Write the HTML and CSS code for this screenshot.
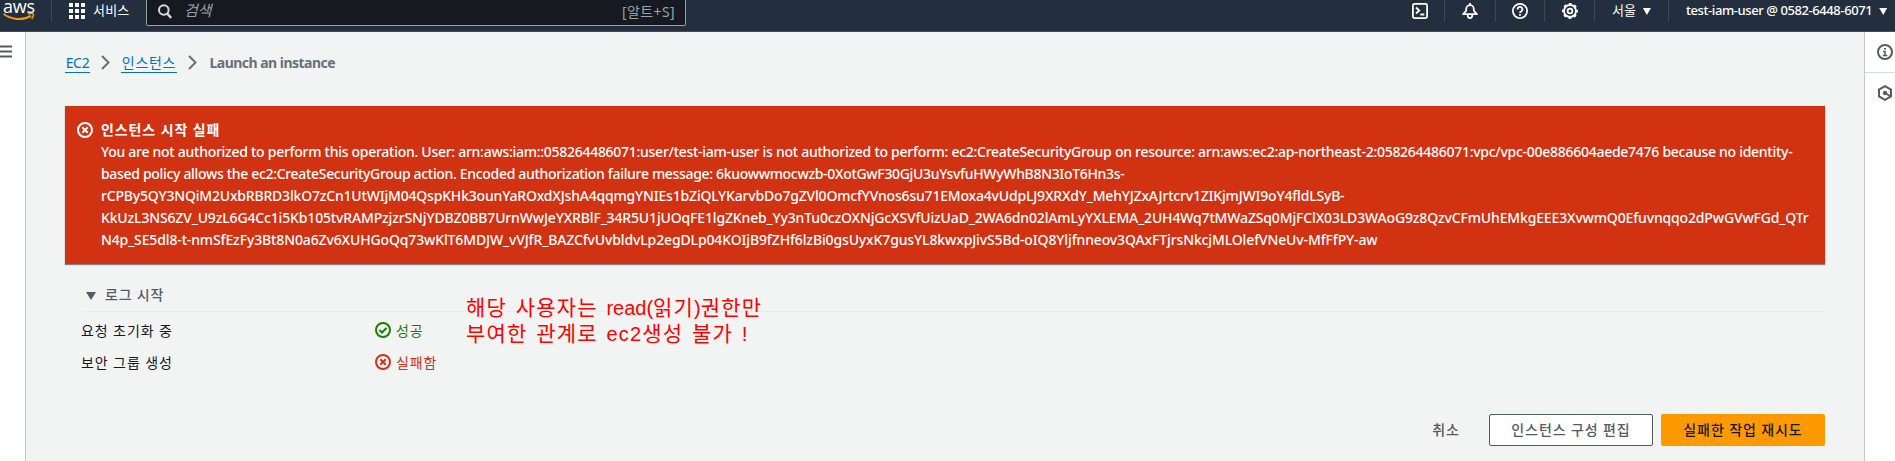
FILE: index.html
```html
<!DOCTYPE html>
<html lang="ko">
<head>
<meta charset="utf-8">
<title>Launch an instance</title>
<link rel="stylesheet" href="styles.css">
</head>
<body>
<header class="topbar">
  <div class="logo">
    <span class="logo-text">aws</span>
    <svg class="smile" width="32" height="8" viewBox="0 0 32 8" fill="none" stroke="#ff9900"><path d="M.5 1C8.500 6.800 19.500 7.800 28 2.800" stroke-width="2"/><path d="M25 1.300c2-.8 4.700-1 5.300-.3.500.9-.3 3.500-1.700 4.900" stroke-width="1.500"/></svg>
  </div>
  <div class="services">
    <svg width="16" height="16" viewBox="0 0 16 16" fill="#fff"><path d="M0 0h4v4H0zM6 0h4v4H6zM12 0h4v4h-4zM0 6h4v4H0zM6 6h4v4H6zM12 6h4v4h-4zM0 12h4v4H0zM6 12h4v4H6zM12 12h4v4h-4z"/></svg>
    <span>서비스</span>
  </div>
  <div class="search">
    <svg width="14" height="15" viewBox="0 0 14 15" fill="none" stroke="#d5dbdb" stroke-width="2"><circle cx="5.800" cy="6" r="4.800"/><path d="M9.200 9.600l4 4.200" stroke-width="2.400"/></svg>
    <span class="placeholder">검색</span>
    <span class="shortcut">[알트+S]</span>
  </div>
  <nav class="tools">
    <div class="tool tool-shell"><svg width="16" height="16" viewBox="0 0 16 16" fill="none" stroke="#fff" stroke-width="1.800"><rect x=".9" y=".9" width="14.200" height="14.200" rx="1.500"/><path d="M4 4.500l3.300 3L4 10.500M8.300 11.500h4"/></svg></div>
    <div class="tool tool-bell"><svg width="16" height="16" viewBox="0 0 16 16" fill="none" stroke="#fff" stroke-width="1.800" stroke-linejoin="round"><path d="M8 0v2M1.200 11.200l3-3.500V6a3.800 3.800 0 0 1 7.600 0v1.700l3 3.500zM5.800 11.500v1.300a2.200 2.200 0 0 0 4.400 0v-1.300"/></svg></div>
    <div class="tool tool-help"><svg width="16" height="16" viewBox="0 0 16 16" fill="none" stroke="#fff" stroke-width="1.800"><circle cx="8" cy="8" r="7.100"/><path d="M5.600 6.500a2.400 2.400 0 1 1 3.600 1.900c-.8.400-1.200.8-1.200 1.700M8 11v1.800"/></svg></div>
    <div class="tool tool-gear"><svg width="16" height="16" viewBox="0 0 16 16" fill="none" stroke="#fff"><circle cx="8" cy="8" r="6" stroke-width="1.800"/><circle cx="8" cy="8" r="7.200" stroke-width="1.600" stroke-dasharray="2.800 2.855" stroke-dashoffset="1.400"/><circle cx="8" cy="8" r="2.400" stroke-width="1.800"/></svg></div>
    <div class="tool tool-region"><span>서울</span><i class="caret"></i></div>
    <div class="tool tool-user"><span>test-iam-user @ 0582-6448-6071</span><i class="caret"></i></div>
  </nav>
</header>
<div class="shell">
  <aside class="left-rail"><svg width="12" height="13" viewBox="0 0 12 13" fill="#545b64"><path d="M0 .5h12v2H0zM0 5.500h12v2H0zM0 10.500h12v2H0z"/></svg></aside>
  <main class="content">
    <nav class="crumbs">
      <a class="crumb-ec2">EC2</a>
      <svg width="9" height="15" viewBox="0 0 9 15" fill="none" stroke="#687078" stroke-width="2"><path d="M1 1l6.500 6.500L1 14"/></svg>
      <a class="crumb-inst">인스턴스</a>
      <svg width="9" height="15" viewBox="0 0 9 15" fill="none" stroke="#687078" stroke-width="2"><path d="M1 1l6.500 6.500L1 14"/></svg>
      <b>Launch an instance</b>
    </nav>
    <section class="alert">
      <svg width="16" height="16" viewBox="0 0 16 16" fill="none" stroke="#fff" stroke-width="2"><circle cx="8" cy="8" r="7"/><path d="M5.300 5.300l5.400 5.400M10.700 5.300l-5.400 5.400"/></svg>
      <div class="alert-body">
        <h2>인스턴스 시작 실패</h2>
        <p class="l1">You are not authorized to perform this operation. User: arn:aws:iam::058264486071:user/test-iam-user is not authorized to perform: ec2:CreateSecurityGroup on resource: arn:aws:ec2:ap-northeast-2:058264486071:vpc/vpc-00e886604aede7476 because no identity-</p>
        <p class="l2">based policy allows the ec2:CreateSecurityGroup action. Encoded authorization failure message: 6kuowwmocwzb-0XotGwF30GjU3uYsvfuHWyWhB8N3IoT6Hn3s-</p>
        <p class="l3">rCPBy5QY3NQiM2UxbRBRD3lkO7zCn1UtWIjM04QspKHk3ounYaROxdXJshA4qqmgYNIEs1bZiQLYKarvbDo7gZVl0OmcfYVnos6su71EMoxa4vUdpLJ9XRXdY_MehYJZxAJrtcrv1ZIKjmJWI9oY4fldLSyB-</p>
        <p class="l4">KkUzL3NS6ZV_U9zL6G4Cc1i5Kb105tvRAMPzjzrSNjYDBZ0BB7UrnWwJeYXRBlF_34R5U1jUOqFE1lgZKneb_Yy3nTu0czOXNjGcXSVfUizUaD_2WA6dn02lAmLyYXLEMA_2UH4Wq7tMWaZSq0MjFClX03LD3WAoG9z8QzvCFmUhEMkgEEE3XvwmQ0Efuvnqqo2dPwGVwFGd_QTr</p>
        <p class="l5">N4p_SE5dl8-t-nmSfEzFy3Bt8N0a6Zv6XUHGoQq73wKlT6MDJW_vVJfR_BAZCfvUvbldvLp2egDLp04KOIjB9fZHf6lzBi0gsUyxK7gusYL8kwxpJivS5Bd-oIQ8Yljfnneov3QAxFTjrsNkcjMLOlefVNeUv-MfFfPY-aw</p>
      </div>
    </section>
    <section class="log">
      <div class="log-head"><i class="caret"></i><span>로그 시작</span></div>
      <div class="log-row"><span class="step">요청 초기화 중</span><span class="ok"><svg width="16" height="16" viewBox="0 0 16 16" fill="none" stroke="#1d8102" stroke-width="2"><circle cx="8" cy="8" r="7"/><path d="M4.500 8l2.500 2.500 4.500-4.500"/></svg>성공</span></div>
      <div class="log-row"><span class="step">보안 그룹 생성</span><span class="fail"><svg width="16" height="16" viewBox="0 0 16 16" fill="none" stroke="#d13212" stroke-width="2"><circle cx="8" cy="8" r="7"/><path d="M5.300 5.300l5.400 5.400M10.700 5.300l-5.400 5.400"/></svg>실패함</span></div>
      <div class="note"><div>해당 사용자는 <span class="latin">read(</span>읽기<span class="latin">)</span>권한만</div><div>부여한 관계로 <span class="latin wide">ec2</span>생성 불가 !</div></div>
    </section>
    <div class="actions">
      <span class="btn btn-link">취소</span>
      <span class="btn btn-normal">인스턴스 구성 편집</span>
      <span class="btn btn-primary">실패한 작업 재시도</span>
    </div>
  </main>
  <aside class="right-rail">
    <div class="rail-item"><svg width="16" height="16" viewBox="0 0 16 16" fill="none" stroke="#545b64" stroke-width="2"><circle cx="8" cy="8" r="7"/><path d="M6 7.500h2V11M5.800 11.500h4.500M7 4.800h2" stroke-width="1.500"/></svg></div>
    <div class="rail-item"><svg width="16" height="16" viewBox="0 0 16 16" fill="none" stroke="#545b64" stroke-width="2"><path d="M8 1.200l6 3.400v6.800l-6 3.400-6-3.400V4.600z"/><circle cx="8" cy="8" r="2.200" fill="#545b64" stroke="none"/><path d="M8 8l5 3"/></svg></div>
  </aside>
</div>
</body>
</html>
```
FILE: styles.css
```css
* { box-sizing: border-box; }
body {
  margin: 0; height: 461px; overflow: hidden; display: flex; flex-direction: column;
  font: 14px/22px "Noto Sans", "Noto Sans CJK KR", sans-serif; color: #16191f; background: #f2f3f3;
}
svg { display: block; flex: none; }
h2, p { margin: 0; }
.topbar { height: 32px; flex: none; display: flex; align-items: flex-start; background: #232f3e; border-bottom: 1px solid #414d5c; color: #fff; }
.logo { width: 52px; height: 22px; padding-left: 3px; border-right: 1px solid #414750; }
.logo-text { display: block; height: 13px; font: 500 18px/13px "Open Sans", sans-serif; letter-spacing: -.2px; }
.services { width: 94px; display: flex; gap: 8px; padding: 3px 0 0 17px; }
.services span { font-size: 13px; line-height: 14px; letter-spacing: .2px; white-space: nowrap; }
.search { width: 540px; height: 26px; display: flex; align-items: flex-start; padding: 4px 10px 0 11px; background: #16191f; border: 1px solid #95a5a6; border-top: 0; border-radius: 0 0 2px 2px; color: #95a5a6; }
.placeholder { margin-left: 12px; font-style: italic; font-size: 15px; line-height: 13px; }
.shortcut { margin-left: auto; line-height: 15px; letter-spacing: .4px; }
.tools { margin-left: auto; display: flex; }
.tool { height: 22px; border-right: 1px solid #414750; display: flex; padding-top: 3px; }
.tool:last-child { border: 0; }
.tool-shell { width: 33px; }
.tool-bell { width: 51px; padding-left: 17px; }
.tool-help { width: 49px; padding-left: 16px; }
.tool-gear { width: 50px; padding-left: 17px; }
.tool-region { width: 74px; padding-left: 17px; font-size: 13px; line-height: 15px; }
.tool-region .caret { margin-left: 6px; }
.tool-user { width: 226px; padding-left: 17px; line-height: 15px; font-size: 13px; font-weight: 500; letter-spacing: -.42px; }
.tool span { white-space: nowrap; }
.caret { flex: none; width: 8px; height: 7px; background: currentColor; clip-path: polygon(0 0, 100% 0, 50% 100%); }
.tool .caret { margin: 5px 0 0 7px; }
.shell { flex: 1; display: flex; min-height: 0; }
.left-rail { width: 26px; background: #fff; border-right: 1px solid #c6cccd; padding-top: 13px; }
.content { flex: 1; min-width: 0; padding: 0 39px; }
.crumbs { height: 74px; padding-top: 20px; display: flex; align-items: flex-start; }
.crumbs a { color: #0073bb; border-bottom: 1px solid #0073bb; height: 21px; text-align: center; white-space: nowrap; }
.crumbs svg { margin: 3px 11px 0 11px; }
.crumbs .crumb-inst + svg { margin-right: 12.500px; }
.crumb-ec2 { width: 25px; letter-spacing: -.3px; }
.crumb-inst { width: 56px; letter-spacing: .7px; }
.crumbs b { color: #687078; font-weight: 700; letter-spacing: -.52px; white-space: nowrap; }
.alert { height: 158px; background: #d13212; color: #fff; display: flex; padding: 13px 0 0 12px; gap: 8px; box-shadow: 0 1px 1px rgba(0,28,36,.5); }
.alert svg { margin-top: 3px; }
.alert h2 { font-size: 14px; line-height: 22px; font-weight: 600; letter-spacing: .9px; }
.alert p { white-space: nowrap; font-weight: 500; }
.l1 { letter-spacing: -.275px; }
.l2 { letter-spacing: -.32px; }
.l3 { letter-spacing: -.19px; }
.l4 { letter-spacing: -.152px; }
.l5 { letter-spacing: -.133px; }
.log { position: relative; padding: 20px 0 0 16px; height: 140px; }
.log-head { height: 28px; padding-left: 4px; display: flex; border-bottom: 1px solid #e9ebed; color: #545b64; letter-spacing: .8px; font-weight: 500; }
.log-head .caret { width: 10px; height: 8px; margin: 8px 9px 0 1px; }
.log-row { display: flex; height: 32px; padding-top: 8px; letter-spacing: .9px; }
.step { width: 294px; }
.ok, .fail { display: flex; gap: 5px; }
.ok { color: #1d8102; }
.fail { color: #d13212; }
.log-row svg { margin-top: 2px; }
.note { position: absolute; left: 401px; top: 31px; color: #f00; font: 400 21px/26px "Liberation Sans", "Noto Sans CJK KR", sans-serif; letter-spacing: 1.150px; word-spacing: 1.800px; white-space: nowrap; }
.latin { font-size: 20px; letter-spacing: 0; }
.wide { letter-spacing: 1.200px; }
.actions { display: flex; justify-content: flex-end; margin-top: 10px; gap: 8px; }
.btn { height: 32px; border: 1px solid transparent; border-radius: 2px; line-height: 29px; text-align: center; font-weight: 500; letter-spacing: .9px; white-space: nowrap; }
.btn-link { width: 68px; color: #545b64; margin-right: 1px; }
.btn-normal { width: 164px; background: #fff; border-color: #545b64; color: #545b64; }
.btn-primary { width: 164px; background: #f90; color: #16191f; }
.right-rail { width: 31px; background: #fff; border-left: 1px solid #c6cccd; }
.rail-item { height: 41px; padding: 12px 0 0 12px; border-bottom: 1px solid #d5dbdb; }
.rail-item:last-child { border: 0; }
```
